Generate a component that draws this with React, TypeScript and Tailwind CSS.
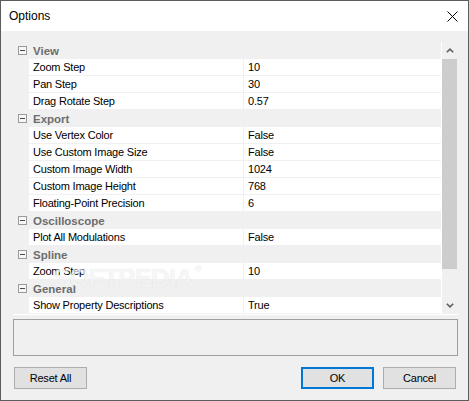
import React from "react";

type Group = { name: string; items: [string, string][] };

const groups: Group[] = [
  { name: "View", items: [["Zoom Step", "10"], ["Pan Step", "30"], ["Drag Rotate Step", "0.57"]] },
  {
    name: "Export",
    items: [
      ["Use Vertex Color", "False"],
      ["Use Custom Image Size", "False"],
      ["Custom Image Width", "1024"],
      ["Custom Image Height", "768"],
      ["Floating-Point Precision", "6"],
    ],
  },
  { name: "Oscilloscope", items: [["Plot All Modulations", "False"]] },
  { name: "Spline", items: [["Zoom Step", "10"]] },
  { name: "General", items: [["Show Property Descriptions", "True"]] },
];

function MinusBox() {
  return (
    <svg width="9" height="9" viewBox="0 0 9 9" className="block">
      <rect x="0.5" y="0.5" width="8" height="8" fill="#f7f7f7" stroke="#9a9a9a" />
      <line x1="2" y1="4.5" x2="7" y2="4.5" stroke="#4a4a4a" />
    </svg>
  );
}

function Chevron({ up }: { up: boolean }) {
  return (
    <svg width="8" height="5" viewBox="0 0 8 5" className="block">
      <polyline
        points={up ? "0.8,4.3 4,1.2 7.2,4.3" : "0.8,0.8 4,3.9 7.2,0.8"}
        fill="none"
        stroke="#606060"
        strokeWidth="1.6"
      />
    </svg>
  );
}

function Button({ label, primary }: { label: string; primary?: boolean }) {
  return (
    <div
      className={
        "w-[73px] h-[22px] flex items-center justify-center bg-[#e1e1e1] text-[11px] tracking-[-0.2px] text-black " +
        (primary ? "border-2 border-[#0078d7]" : "border border-[#adadad]")
      }
    >
      {label}
    </div>
  );
}

export default function App() {
  return (
    <div
      className="relative w-[469px] h-[401px] border border-[#5c5c5c] bg-[#f0f0f0] flex flex-col overflow-hidden"
      style={{ fontFamily: '"Liberation Sans", Arial, sans-serif' }}
    >
      {/* Title bar */}
      <div className="h-[30px] bg-white flex items-center justify-between pl-[8px] pr-[10px] shrink-0">
        <span className="text-[12px] text-black">Options</span>
        <svg width="11" height="11" viewBox="0 0 11 11" className="block">
          <line x1="0.5" y1="0.5" x2="10.5" y2="10.5" stroke="#000" strokeWidth="1" />
          <line x1="10.5" y1="0.5" x2="0.5" y2="10.5" stroke="#000" strokeWidth="1" />
        </svg>
      </div>

      {/* Body */}
      <div className="flex flex-col pl-[12px] pr-[10px] pt-[11px]">
        {/* Property grid */}
        <div className="flex h-[272px]">
          <div className="w-[428px] flex flex-col">
            {groups.map((g) => (
              <React.Fragment key={g.name}>
                <div className="h-[17px] flex items-center bg-[#f0f0f0]">
                  <div className="w-[16px] flex items-center justify-center pl-[2px]">
                    <MinusBox />
                  </div>
                  <span className="pl-[4px] text-[11.5px] font-bold text-[#6d6d6d] leading-[16px]">
                    {g.name}
                  </span>
                </div>
                {g.items.map(([label, value], i) => (
                  <div key={g.name + i} className="h-[17px] flex bg-[#f0f0f0]">
                    <div className="w-[16px]" />
                    <div className="w-[214px] h-[16px] bg-white pl-[4px] text-[11px] tracking-[-0.2px] leading-[16px] text-black whitespace-nowrap">
                      {label}
                    </div>
                    <div className="w-[1px]" />
                    <div className="w-[197px] h-[16px] bg-white pl-[4px] text-[11px] tracking-[-0.2px] leading-[16px] text-black">
                      {value}
                    </div>
                  </div>
                ))}
              </React.Fragment>
            ))}
          </div>
          {/* Scrollbar */}
          <div className="w-[17px] flex flex-col border-l border-white">
            <div className="h-[17px] flex items-center justify-center">
              <Chevron up />
            </div>
            <div className="w-[15px] h-[210px] bg-[#cdcdcd]" />
            <div className="flex-1" />
            <div className="h-[17px] flex items-center justify-center">
              <Chevron up={false} />
            </div>
          </div>
        </div>

        {/* Description area */}
        <div className="border-t border-white pt-[4px]">
          <div className="h-[37px] border border-[#a0a0a0]" />
        </div>

        {/* Buttons */}
        <div className="flex items-center justify-between mt-[11px] pl-[1px] pr-[2px]">
          <Button label="Reset All" />
          <div className="flex gap-[9px]">
            <Button label="OK" primary />
            <Button label="Cancel" />
          </div>
        </div>
      </div>

      {/* Watermark overlay */}
      <div
        className="pointer-events-none absolute left-[52px] top-[264px] text-[26px] font-bold tracking-[-1px] text-white/70 leading-none"
        style={{ textShadow: "0 0 1px rgba(0,0,0,0.12)" }}
      >
        SOFTPEDIA<span className="text-[9px] align-top ml-[2px]">®</span>
      </div>
    </div>
  );
}
